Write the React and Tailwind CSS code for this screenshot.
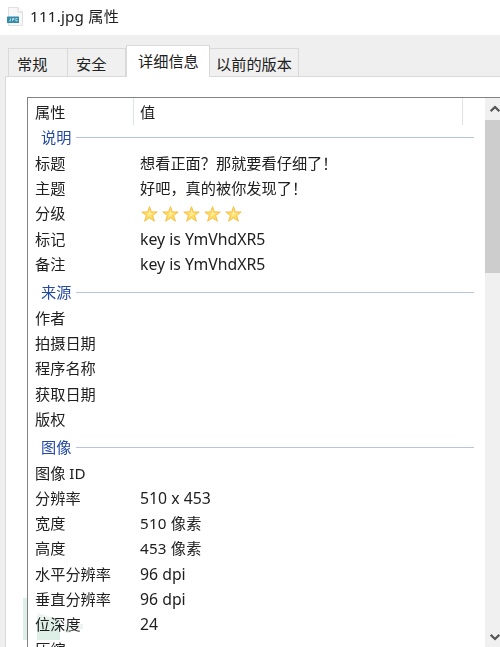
import React from 'react';

const groups = [
  {
    name: '说明',
    head: 'h-[26px] pb-[1px]',
    rows: [
      ['标题', '想看正面？那就要看仔细了！'],
      ['主题', '好吧，真的被你发现了！'],
      ['分级', 'stars'],
      ['标记', 'key is YmVhdXR5'],
      ['备注', 'key is YmVhdXR5'],
    ],
  },
  {
    name: '来源',
    head: 'h-[29px] pt-[2px]',
    rows: [['作者'], ['拍摄日期'], ['程序名称'], ['获取日期'], ['版权']],
  },
  {
    name: '图像',
    head: 'h-[29px] pt-[2px]',
    rows: [
      ['图像 ID'],
      ['分辨率', '510 x 453'],
      ['宽度', '510 像素'],
      ['高度', '453 像素'],
      ['水平分辨率', '96 dpi'],
      ['垂直分辨率', '96 dpi'],
      ['位深度', '24'],
      ['压缩'],
    ],
  },
];

function valueStyle(value) {
  if (!value || !/[0-9]/.test(value)) return '';
  return /像素/.test(value) ? 'tracking-[0.2px]' : 'text-[15.8px]';
}

function Star() {
  return (
    <svg className="h-4 w-[17px]" viewBox="0 0 17 16">
      <path
        d="M8.5 .6 10.3 5.9 16.2 6 11.6 9.5 13.4 15.2 8.5 11.9 3.6 15.2 5.4 9.5 .8 6 6.7 5.9Z"
        fill="#ffdc62"
        stroke="#f6bf4c"
        strokeWidth="1"
        strokeLinejoin="miter"
      />
      <path d="M8.5 4 9.5 7 12.5 7.2 8.5 9.5 6 11 7 8.5Z" fill="#ffec9a" />
    </svg>
  );
}

function FileIcon() {
  return (
    <svg className="mt-[7px] h-[19px] w-[17px]" viewBox="0 0 17 19">
      <path d="M1.5.5H11L15.5 5V18.5H1.5Z" fill="#f8f8f8" stroke="#e0e0e0" />
      <path d="M11 .5V5H15.5" fill="#fff" stroke="#d4d4d4" />
      <rect x="0" y="9.5" width="12" height="6.5" rx=".6" fill="#348ba8" />
      <path
        d="M3.5 11.2V13.8H2M5.5 14.2V11.5H7V12.7H5.5M10.3 11.5H8.8V13.9H10.3V12.9"
        fill="none"
        stroke="#c4e6ef"
        strokeWidth=".8"
      />
    </svg>
  );
}

function Tab({ children, className }) {
  return (
    <div className={`box-border flex h-[28px] items-center border-t border-r border-[#d9d9d9] bg-[#f0f0f0] pt-[4px] pl-[8px] ${className}`}>
      {children}
    </div>
  );
}

export default function App() {
  return (
    <div className="relative flex h-[647px] w-[500px] flex-col overflow-hidden bg-[#efefef] font-['Noto_Sans','Noto_Sans_CJK_SC',sans-serif] text-[15.2px] leading-[25.2px] whitespace-nowrap text-[#202020]">
      <header className="flex h-[35px] shrink-0 bg-white pl-[7px]">
        <FileIcon />
        <span className="mt-[4px] ml-[6px] text-[15.2px] tracking-[0.2px]">111.jpg 属性</span>
      </header>
      <nav className="z-10 flex h-[42px] shrink-0 items-end pl-[8px]">
        <Tab className="mb-px w-[60px] border-l">常规</Tab>
        <Tab className="mb-px w-[58px]">安全</Tab>
        <div className="flex h-[32px] w-[84px] items-center border-t border-r border-l border-[#d9d9d9] bg-white pl-[11px]">
          详细信息
        </div>
        <Tab className="mb-px w-[89px] !pl-[6px]">以前的版本</Tab>
      </nav>
      <div className="-mt-px ml-[5px] flex min-h-0 flex-1 border-t border-l border-[#d9d9d9] bg-white pt-[20px] pl-[21px]">
        <div className="flex min-w-0 flex-1 overflow-hidden border-t border-l border-[#828282]">
          <main className="w-[457px] shrink-0">
            <div className="flex h-[27px]">
              <div className="w-[106px] border-r border-[#dce3eb] pt-[2px] pl-[7px]">属性</div>
              <div className="w-[329px] border-r border-[#e2e2e2] pt-[2px] pl-[6px]">值</div>
            </div>
            {groups.map((group) => (
              <section key={group.name}>
                <div className={`flex items-center pl-[13px] text-[#2449a5] ${group.head}`}>
                  <span className="w-[35px]">{group.name}</span>
                  <span className="h-px w-[398px] bg-[#b5c5df]" />
                </div>
                {group.rows.map(([label, value]) => (
                  <div key={label} className="flex h-[25.2px]">
                    <span className="w-[112px] shrink-0 pl-[7px]">{label}</span>
                    {value === 'stars' ? (
                      <span className="flex items-center gap-[4.2px] pl-[0.5px]">
                        <Star /><Star /><Star /><Star /><Star />
                      </span>
                    ) : (
                      <span className={valueStyle(value)}>{value}</span>
                    )}
                  </div>
                ))}
              </section>
            ))}
          </main>
          <aside className="flex flex-1 flex-col bg-[#f0f0f0]">
            <div className="flex h-[22px] shrink-0 items-center pl-[5px]">
              <svg className="h-[8px] w-[10px]" viewBox="0 0 10 8"><path d="M.7 6.2 5 2 9.3 6.2" fill="none" stroke="#555" strokeWidth="2.2" /></svg>
            </div>
            <div className="h-[153px] shrink-0 bg-[#cdcdcd]" />
            <div className="flex flex-1 items-end pb-[6px] pl-[5px]">
              <svg className="h-[8px] w-[10px]" viewBox="0 0 10 8"><path d="M.7 1.8 5 6 9.3 1.8" fill="none" stroke="#555" strokeWidth="2.2" /></svg>
            </div>
          </aside>
        </div>
      </div>
      <svg className="pointer-events-none absolute top-[597px] left-[22px] h-[44px] w-[64px] mix-blend-multiply" viewBox="0 0 64 44">
        <path d="M1 1H5V43H1ZM15 19 28 22H38V43H15Z" fill="#ddefe7" />
        <path d="M16 16 28 20 38 22H15ZM43 27H61V32H49V36H43Z" fill="#edf4f0" />
      </svg>
    </div>
  );
}
